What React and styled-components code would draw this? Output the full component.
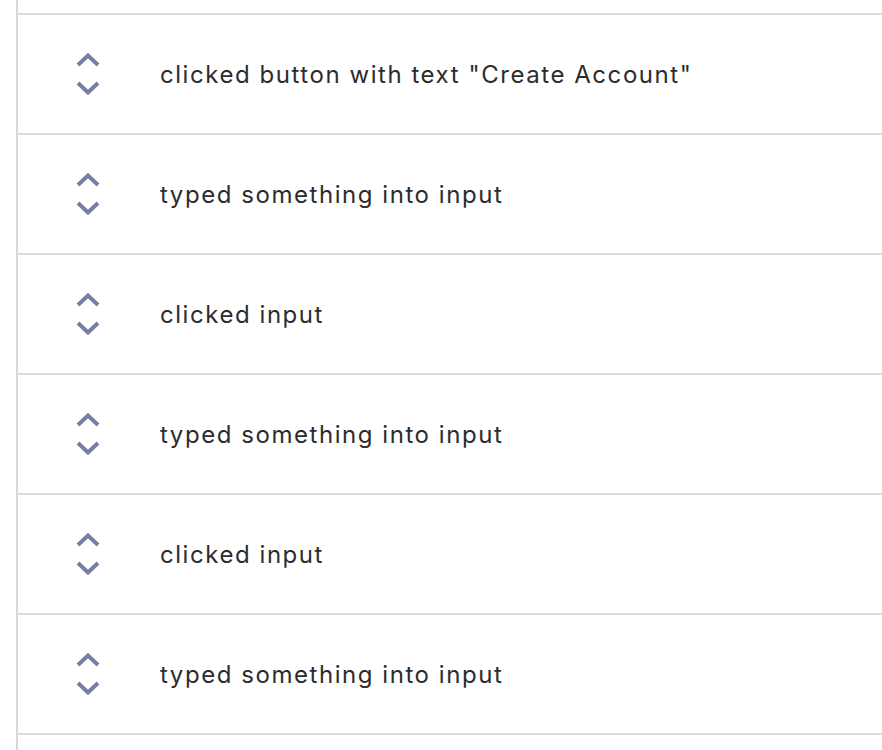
import React from "react";
import styled, { createGlobalStyle } from "styled-components";

const GlobalStyle = createGlobalStyle`
  html, body {
    margin: 0;
    padding: 0;
    background: #ffffff;
  }
  body {
    font-family: Inter, "Noto Sans", sans-serif;
    -webkit-font-smoothing: antialiased;
  }
`;

const events = [
  'clicked button with text "Create Account"',
  "typed something into input",
  "clicked input",
  "typed something into input",
  "clicked input",
  "typed something into input",
];

// up / down reorder handle
const Handle = () => (
  <svg width="24" height="48" viewBox="0 0 24 48" fill="none">
    <path d="M2 15 L12 5.5 L22 15" stroke="#777fa6" strokeWidth="4" />
    <path d="M2 33 L12 42.5 L22 33" stroke="#777fa6" strokeWidth="4" />
  </svg>
);

export default function App() {
  return (
    <>
      <GlobalStyle />
      <Page>
        <List>
          <Cut />
          {events.map((text, i) => (
            <Row key={i}>
              <Arrows>
                <Handle />
              </Arrows>
              <Label>{text}</Label>
            </Row>
          ))}
        </List>
      </Page>
    </>
  );
}

const Page = styled.div`
  width: 882px;
  height: 750px;
  overflow: hidden;
  padding-left: 16px;
  box-sizing: border-box;
`;

const List = styled.div`
  border-left: 2px solid #d9d9d9;
  height: 100%;
`;

const Cut = styled.div`
  height: 13px;
`;

const Row = styled.div`
  display: flex;
  align-items: center;
  height: 118px;
  border-top: 2px solid #dcdcdc;
  &:last-child {
    border-bottom: 2px solid #dcdcdc;
  }
`;

const Arrows = styled.div`
  width: 24px;
  margin-left: 58px;
  margin-right: 60px;
  display: flex;
  align-items: center;
  svg {
    display: block;
  }
`;

const Label = styled.span`
  font-size: 24px;
  color: #2c2c2e;
  letter-spacing: 1.55px;
  padding-top: 1px;
`;
